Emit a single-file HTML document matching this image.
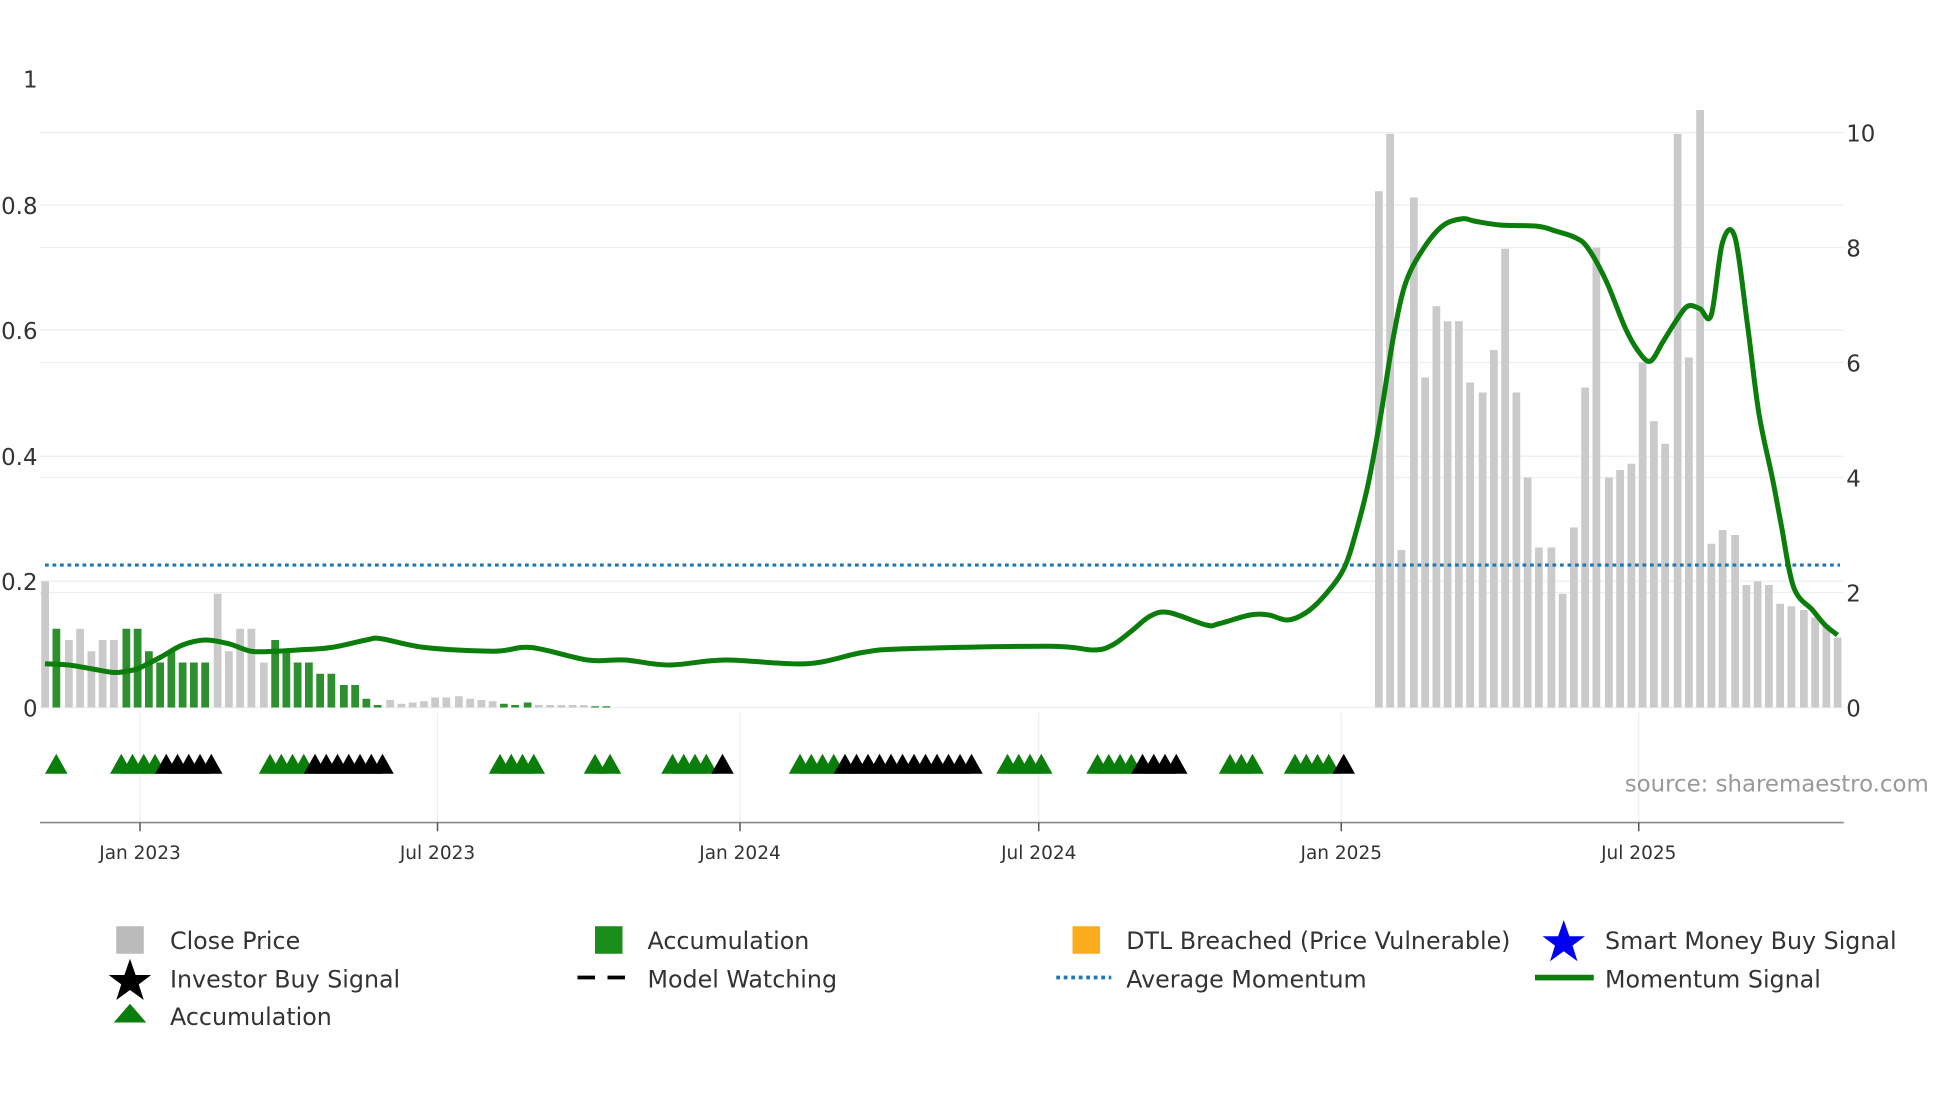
<!DOCTYPE html>
<html><head><meta charset="utf-8"><style>
html,body{margin:0;padding:0;background:#fff;}
svg{display:block;font-family:"DejaVu Sans","Liberation Sans",sans-serif;}
</style></head><body>
<svg id="s" width="1960" height="1102" viewBox="0 0 1568 881.6" xmlns="http://www.w3.org/2000/svg">
<g stroke="#eceef1" stroke-width="1">
<line x1="32" x2="1475" y1="106" y2="106"/><line x1="32" x2="1475" y1="198" y2="198"/><line x1="32" x2="1475" y1="290" y2="290"/><line x1="32" x2="1475" y1="382" y2="382"/><line x1="32" x2="1475" y1="474" y2="474"/>
<line x1="32" x2="1475" y1="164" y2="164"/><line x1="32" x2="1475" y1="264" y2="264"/><line x1="32" x2="1475" y1="365" y2="365"/><line x1="32" x2="1475" y1="465" y2="465"/>
<line x1="32" x2="1475" y1="566" y2="566"/>
<line x1="112" x2="112" y1="570" y2="658"/><line x1="350" x2="350" y1="570" y2="658"/><line x1="592" x2="592" y1="570" y2="658"/><line x1="831" x2="831" y1="570" y2="658"/><line x1="1073" x2="1073" y1="570" y2="658"/><line x1="1311" x2="1311" y1="570" y2="658"/>
</g>
<g id="bars"></g>
<line x1="36" x2="1472" y1="452" y2="452" stroke="#1f77b4" stroke-width="2.5" stroke-dasharray="3,3"/>
<path id="mom" fill="none" stroke="#0a7d0a" stroke-width="4" stroke-linejoin="round"/>
<g id="tri"></g>
<line x1="32" x2="1475" y1="658" y2="658" stroke="#888" stroke-width="1.3"/>
<g stroke="#555" stroke-width="1.2"><line x1="112" x2="112" y1="658" y2="665"/><line x1="350" x2="350" y1="658" y2="665"/><line x1="592" x2="592" y1="658" y2="665"/><line x1="831" x2="831" y1="658" y2="665"/><line x1="1073" x2="1073" y1="658" y2="665"/><line x1="1311" x2="1311" y1="658" y2="665"/></g>
<g font-size="14.8" fill="#333" text-anchor="middle">
<text x="112" y="687">Jan 2023</text><text x="350" y="687">Jul 2023</text><text x="592" y="687">Jan 2024</text><text x="831" y="687">Jul 2024</text><text x="1073" y="687">Jan 2025</text><text x="1311" y="687">Jul 2025</text>
</g>
<g font-size="18.3" fill="#333" text-anchor="end">
<text x="30" y="70">1</text><text x="30" y="171">0.8</text><text x="30" y="271">0.6</text><text x="30" y="372">0.4</text><text x="30" y="472">0.2</text><text x="30" y="573">0</text>
</g>
<g font-size="18.3" fill="#333">
<text x="1477" y="113">10</text><text x="1477" y="205">8</text><text x="1477" y="297">6</text><text x="1477" y="389">4</text><text x="1477" y="481">2</text><text x="1477" y="573">0</text>
</g>
<text x="1543" y="633" font-size="18.3" fill="#999" text-anchor="end">source: sharemaestro.com</text>
<g font-size="19" fill="#333">
<rect x="93" y="741" width="22" height="22" fill="#bbb"/><text x="136" y="759">Close Price</text>
<rect x="476" y="741" width="22" height="22" fill="#1a8c1a"/><text x="518" y="759">Accumulation</text>
<rect x="858" y="741" width="22" height="22" fill="#fbac1c"/><text x="901" y="759">DTL Breached (Price Vulnerable)</text>
<polygon points="1251,736 1255.5,749 1268,749 1258,756.5 1262,769 1251,761 1240,769 1244,756.5 1234,749 1246.5,749" fill="#0000ee"/><text x="1284" y="759">Smart Money Buy Signal</text>
<polygon points="104,767 108.5,780 121,780 111,787.5 115,800 104,792 93,800 97,787.5 87,780 99.5,780" fill="#000"/><text x="136" y="790">Investor Buy Signal</text>
<line x1="462" x2="506" y1="782" y2="782" stroke="#000" stroke-width="3" stroke-dasharray="14,10"/><text x="518" y="790">Model Watching</text>
<line x1="845" x2="889" y1="782" y2="782" stroke="#1f77b4" stroke-width="3" stroke-dasharray="3,3"/><text x="901" y="790">Average Momentum</text>
<line x1="1228" x2="1275" y1="782" y2="782" stroke="#0a7d0a" stroke-width="4.5"/><text x="1284" y="790">Momentum Signal</text>
<polygon points="104,803 117,818 91,818" fill="#0a7d0a"/><text x="136" y="820">Accumulation</text>
</g>
</svg>
<script>
var NS="http://www.w3.org/2000/svg";
function el(t,a,p){var e=document.createElementNS(NS,t);for(var k in a)e.setAttribute(k,a[k]);p.appendChild(e);}
var B=[[36,465,'g'],[45,503,'G'],[55,512,'g'],[64,503,'g'],[73,521,'g'],[82,512,'g'],[91,512,'g'],[101,503,'G'],[110,503,'G'],[119,521,'G'],[128,530,'G'],[137,521,'G'],[146,530,'G'],[155,530,'G'],[164,530,'G'],[174,475,'g'],[183,521,'g'],[192,503,'g'],[201,503,'g'],[211,530,'g'],[220,512,'G'],[229,521,'G'],[238,530,'G'],[247,530,'G'],[256,539,'G'],[265,539,'G'],[275,548,'G'],[284,548,'G'],[293,559,'G'],[302,564,'G'],[312,560,'g'],[321,563,'g'],[330,562,'g'],[339,561,'g'],[348,558,'g'],[357,558,'g'],[367,557,'g'],[376,559,'g'],[385,560,'g'],[394,561,'g'],[403,563,'G'],[412,564,'G'],[422,562,'G'],[431,564,'g'],[440,564,'g'],[449,564,'g'],[458,564,'g'],[467,564,'g'],[476,565,'G'],[485,565,'G'],
[1103,153,'g'],[1112,107,'g'],[1121,440,'g'],[1131,158,'g'],[1140,302,'g'],[1149,245,'g'],[1158,257,'g'],[1167,257,'g'],[1176,306,'g'],[1186,314,'g'],[1195,280,'g'],[1204,199,'g'],[1213,314,'g'],[1222,382,'g'],[1231,438,'g'],[1241,438,'g'],[1250,475,'g'],[1259,422,'g'],[1268,310,'g'],[1277,198,'g'],[1287,382,'g'],[1296,376,'g'],[1305,371,'g'],[1314,290,'g'],[1323,337,'g'],[1332,355,'g'],[1342,107,'g'],[1351,286,'g'],[1360,88,'g'],[1369,435,'g'],[1378,424,'g'],[1388,428,'g'],[1397,468,'g'],[1406,465,'g'],[1415,468,'g'],[1424,483,'g'],[1433,485,'g'],[1443,488,'g'],[1452,494,'g'],[1461,500,'g'],[1470,510,'g']];
var bg=document.getElementById('bars');
B.forEach(function(b){el('rect',{x:b[0]-3,y:b[1],width:6.2,height:566-b[1],fill:b[2]=='G'?'#2e8f2e':'#cacaca'},bg);});
var P=[[36,531],[55,532],[73,535],[91,538],[101,537],[110,535],[128,526],[146,516],[164,512],[183,515],[201,521],[220,521],[238,520],[265,518],[293,512],[305,511],[340,518],[395,521],[425,518],[470,528],[500,528],[535,532],[580,528],[645,531],[690,522],[725,519],[840,517],[875,520],[890,516],[905,505],[920,493],[935,490],[965,500],[975,499],[1000,492],[1015,492],[1030,496],[1045,490],[1060,476],[1075,455],[1085,425],[1095,385],[1105,330],[1115,268],[1125,225],[1140,197],[1155,180],[1170,175],[1180,177],[1200,180],[1230,181],[1245,185],[1260,190],[1270,198],[1285,225],[1300,262],[1310,280],[1320,289],[1330,274],[1340,258],[1350,245],[1360,247],[1369,252],[1378,194],[1388,190],[1398,260],[1407,330],[1418,383],[1425,420],[1435,470],[1450,488],[1460,500],[1470,508]];
var d='M'+P[0][0]+','+P[0][1];
for(var i=0;i<P.length-1;i++){var p0=P[Math.max(i-1,0)],p1=P[i],p2=P[i+1],p3=P[Math.min(i+2,P.length-1)];
var c1x=p1[0]+(p2[0]-p0[0])/6,c1y=p1[1]+(p2[1]-p0[1])/6,c2x=p2[0]-(p3[0]-p1[0])/6,c2y=p2[1]-(p3[1]-p1[1])/6;
d+=' C'+c1x.toFixed(1)+','+c1y.toFixed(1)+' '+c2x.toFixed(1)+','+c2y.toFixed(1)+' '+p2[0]+','+p2[1];}
document.getElementById('mom').setAttribute('d',d);
var tg=document.getElementById('tri');
function tri(x,c){el('polygon',{points:(x-9)+',619 '+x+',603 '+(x+9)+',619',fill:c},tg);}
var G=[45,97,106,115,124,216,225,234,243,400,409,418,427,476,488,538,547,556,565,640,649,658,667,806,815,824,833,878,887,896,905,984,993,1002,1036,1045,1054,1063];
var K=[133,142,151,160,169,252,261,270,279,288,297,306,578,914,923,932,941,1075];
for(var x=676;x<=786;x+=9.2)K.push(x);
G.forEach(function(x){tri(x,'#0a7d0a')});K.forEach(function(x){tri(x,'#000')});
</script>
</body></html>
